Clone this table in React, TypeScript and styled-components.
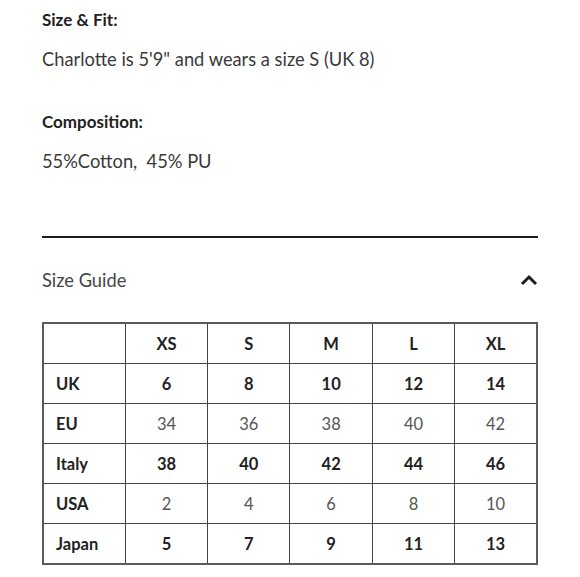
import styled, { createGlobalStyle } from "styled-components";

const GlobalStyle = createGlobalStyle`
  body {
    margin: 0;
    background: #ffffff;
    font-family: Lato, "Noto Sans", sans-serif;
    color: #333;
  }
`;

const Page = styled.div`
  padding: 8px 42px 0;
  width: 496px;
`;

const Section = styled.div`
  display: flex;
  flex-direction: column;
  gap: 15px;
  margin-bottom: 39px;
`;

const Label = styled.div`
  font-size: 17px;
  font-weight: 700;
  color: #222;
  line-height: 24px;
`;

const Value = styled.div`
  font-size: 18.3px;
  color: #3a3a3a;
  line-height: 24px;
`;

const Divider = styled.hr`
  border: none;
  height: 2px;
  background: #1e1e1e;
  margin: 63px 0 0;
`;

const GuideHeader = styled.div`
  display: flex;
  align-items: center;
  justify-content: space-between;
  height: 84px;
  font-size: 18.3px;
  color: #444;
`;

const SizeTable = styled.table`
  width: 100%;
  border-collapse: collapse;
  border: 2px solid #5a5a5a;
  table-layout: fixed;
`;

const Cell = styled.td<{ $bold?: boolean; $head?: boolean }>`
  height: 39px;
  padding: 0;
  border: 1px solid #444;
  font-size: 16.5px;
  font-weight: ${(p) => (p.$bold ? 700 : 400)};
  color: ${(p) => (p.$bold ? "#222" : "#555")};
  text-align: ${(p) => (p.$head ? "left" : "center")};
  padding-left: ${(p) => (p.$head ? "12px" : "0")};
`;

const sizes = ["XS", "S", "M", "L", "XL"];
const rows: { name: string; values: string[]; bold: boolean }[] = [
  { name: "UK", values: ["6", "8", "10", "12", "14"], bold: true },
  { name: "EU", values: ["34", "36", "38", "40", "42"], bold: false },
  { name: "Italy", values: ["38", "40", "42", "44", "46"], bold: true },
  { name: "USA", values: ["2", "4", "6", "8", "10"], bold: false },
  { name: "Japan", values: ["5", "7", "9", "11", "13"], bold: true },
];

function Chevron() {
  return (
    <svg width="18" height="12" viewBox="0 0 18 12" fill="none">
      <path d="M2 10L9 3L16 10" stroke="#1e1e1e" strokeWidth="3" />
    </svg>
  );
}

export default function App() {
  return (
    <>
      <GlobalStyle />
      <Page>
        <Section>
          <Label>Size &amp; Fit:</Label>
          <Value>Charlotte is 5'9" and wears a size S (UK 8)</Value>
        </Section>
        <Section>
          <Label>Composition:</Label>
          <Value>55%Cotton,&nbsp; 45% PU</Value>
        </Section>
        <Divider />
        <GuideHeader>
          <span>Size Guide</span>
          <Chevron />
        </GuideHeader>
        <SizeTable>
          <tbody>
            <tr>
              <Cell $head />
              {sizes.map((s) => (
                <Cell key={s} $bold>
                  {s}
                </Cell>
              ))}
            </tr>
            {rows.map((r) => (
              <tr key={r.name}>
                <Cell $head $bold>
                  {r.name}
                </Cell>
                {r.values.map((v, i) => (
                  <Cell key={i} $bold={r.bold}>
                    {v}
                  </Cell>
                ))}
              </tr>
            ))}
          </tbody>
        </SizeTable>
      </Page>
    </>
  );
}
